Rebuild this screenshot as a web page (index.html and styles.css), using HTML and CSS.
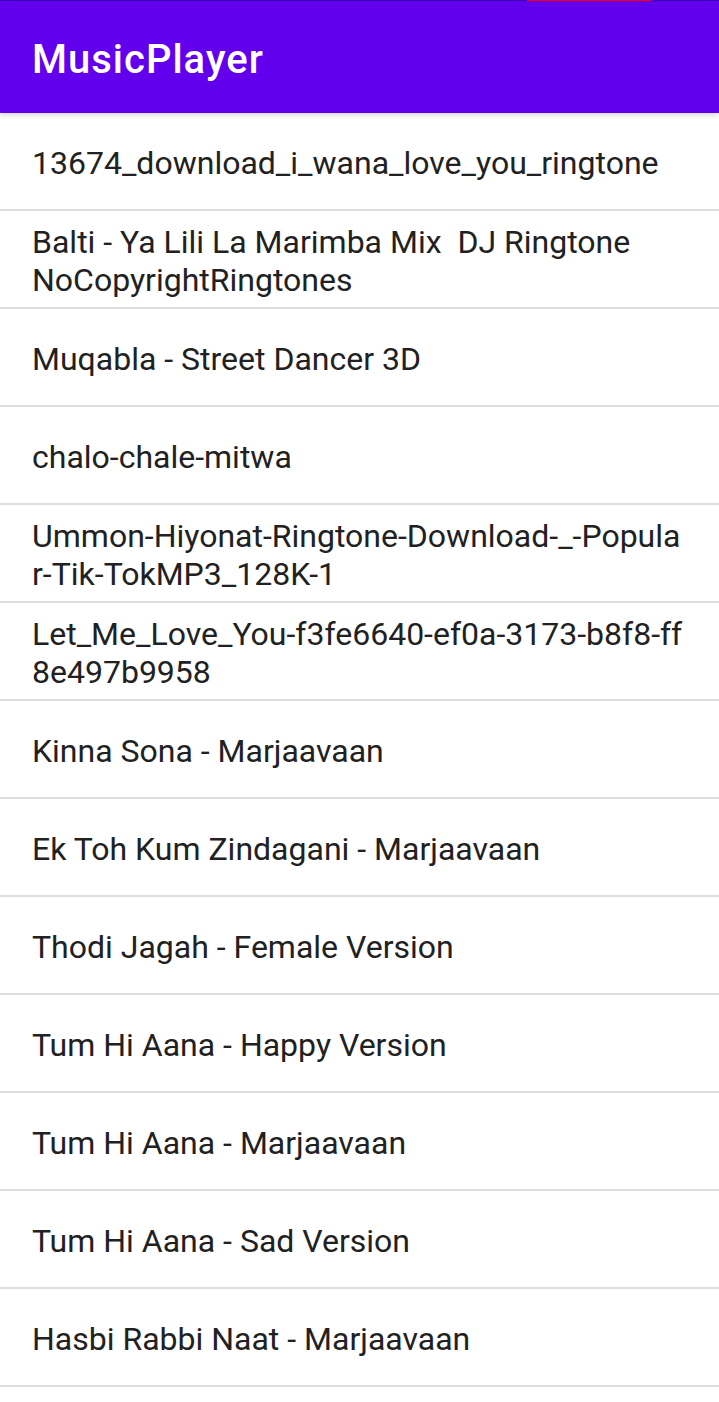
FILE: index.html
```html
<!DOCTYPE html>
<html>
<head>
<meta charset="utf-8">
<title>MusicPlayer</title>
<link rel="stylesheet" href="styles.css">
</head>
<body>
<div class="status-line"><span class="status-mark"></span></div>
<header class="app-bar"><h1 class="app-title">MusicPlayer</h1></header>
<ul class="song-list">
  <li class="song">13674_download_i_wana_love_you_ringtone</li>
  <li class="song">Balti - Ya Lili La Marimba Mix&nbsp; DJ Ringtone NoCopyrightRingtones</li>
  <li class="song">Muqabla - Street Dancer 3D</li>
  <li class="song">chalo-chale-mitwa</li>
  <li class="song song-break">Ummon-Hiyonat-Ringtone-Download-_-Popular-Tik-TokMP3_128K-1</li>
  <li class="song song-break">Let_Me_Love_You-f3fe6640-ef0a-3173-b8f8-ff8e497b9958</li>
  <li class="song">Kinna Sona - Marjaavaan</li>
  <li class="song">Ek Toh Kum Zindagani - Marjaavaan</li>
  <li class="song">Thodi Jagah - Female Version</li>
  <li class="song">Tum Hi Aana - Happy Version</li>
  <li class="song">Tum Hi Aana - Marjaavaan</li>
  <li class="song">Tum Hi Aana - Sad Version</li>
  <li class="song">Hasbi Rabbi Naat - Marjaavaan</li>
</ul>
</body>
</html>
```
FILE: styles.css
```css
html, body {
  margin: 0;
  padding: 0;
  background: #ffffff;
  font-family: Roboto, "Noto Sans", sans-serif;
  overflow: hidden;
}

.status-line {
  position: relative;
  height: 1px;
  background: #3a00b8;
}

.status-mark {
  position: absolute;
  left: 527px;
  top: 0;
  width: 125px;
  height: 2px;
  background: #ff0000;
}

.app-bar {
  position: relative;
  z-index: 2;
  height: 112px;
  background: #6200ee;
  display: flex;
  align-items: center;
  padding: 5px 32px 0;
  box-sizing: border-box;
  box-shadow: 0 2px 5px rgba(0, 0, 0, 0.16);
}

.app-title {
  margin: 0;
  color: #ffffff;
  font-size: 40px;
  font-weight: 500;
  letter-spacing: 1px;
  line-height: normal;
}

.song-list {
  list-style: none;
  margin: 0;
  padding: 0;
}

.song {
  min-height: 98px;
  box-sizing: border-box;
  display: flex;
  align-items: center;
  padding: 3px 32px 0;
  font-size: 32px;
  line-height: 38px;
  color: #212121;
  border-bottom: 2px solid #dedede;
}

.song-break {
  word-break: break-all;
}
```
